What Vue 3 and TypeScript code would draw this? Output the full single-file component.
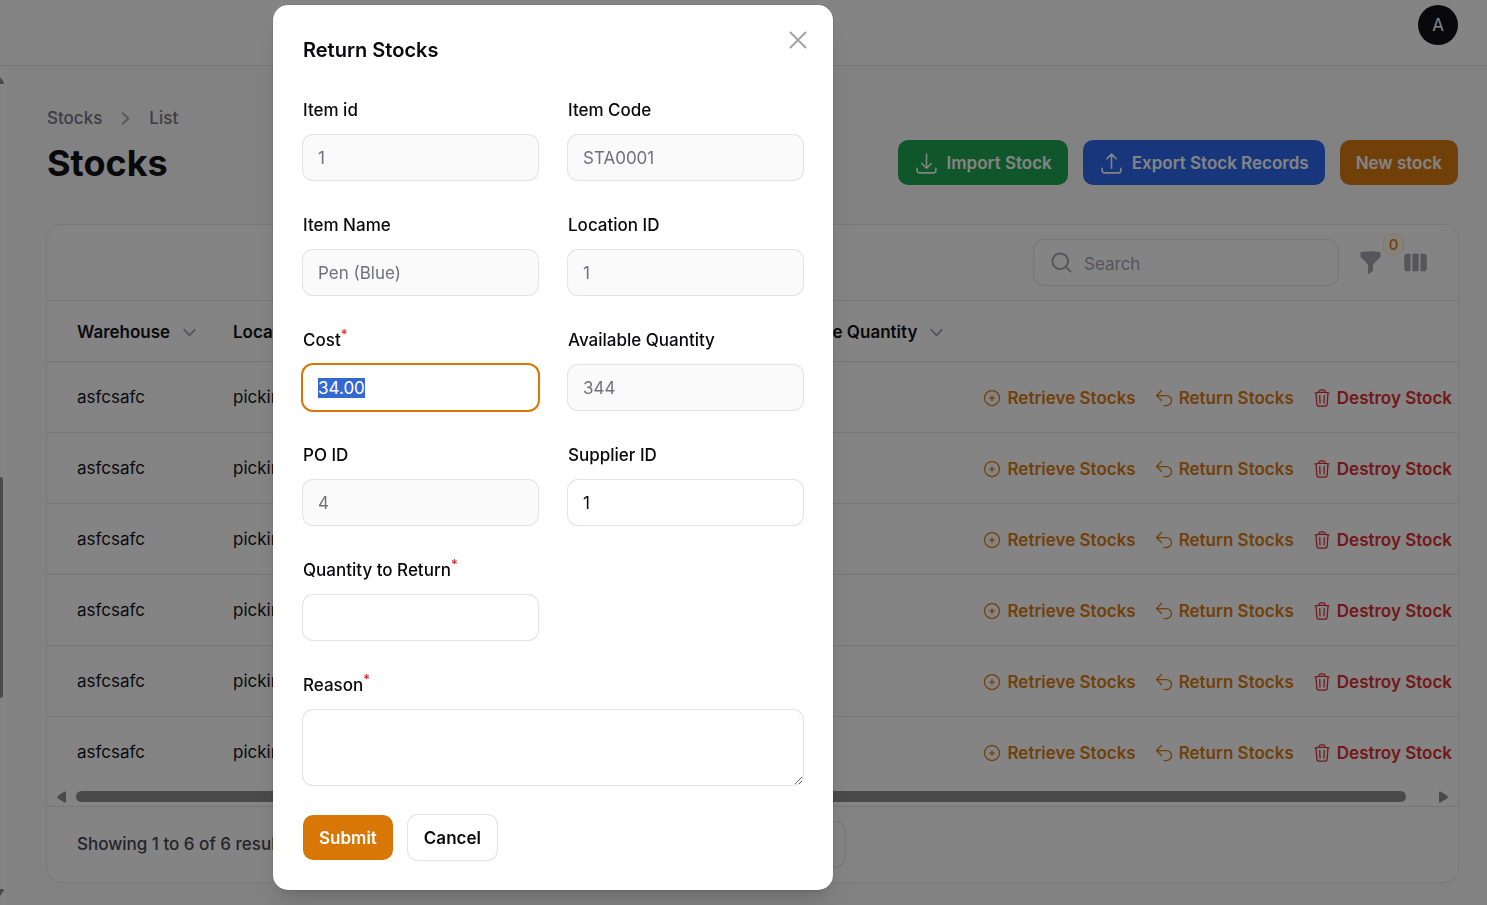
<script setup lang="ts">
import { onMounted, ref } from 'vue'

interface Field {
  id: string
  label: string
  value: string
  disabled?: boolean
  required?: boolean
}

const fields = ref<Field[]>([
  { id: 'item-id', label: 'Item id', value: '1', disabled: true },
  { id: 'item-code', label: 'Item Code', value: 'STA0001', disabled: true },
  { id: 'item-name', label: 'Item Name', value: 'Pen (Blue)', disabled: true },
  { id: 'location-id', label: 'Location ID', value: '1', disabled: true },
  { id: 'cost', label: 'Cost', value: '34.00', required: true },
  { id: 'available', label: 'Available Quantity', value: '344', disabled: true },
  { id: 'po-id', label: 'PO ID', value: '4', disabled: true },
  { id: 'supplier-id', label: 'Supplier ID', value: '1' },
  { id: 'quantity', label: 'Quantity to Return', value: '', required: true },
])
const reason = ref('')
const search = ref('')

const rows = Array.from({ length: 6 }, (_, i) => ({ id: i + 1, warehouse: 'asfcsafc', location: 'picking' }))

const chevronDown =
  'M5.23 7.21a.75.75 0 011.06.02L10 11.168l3.71-3.938a.75.75 0 111.08 1.04l-4.25 4.5a.75.75 0 01-1.08 0l-4.25-4.5a.75.75 0 01.02-1.06z'

const actions = [
  { label: 'Retrieve Stocks', tone: 'amber', icon: 'M12 9v6m3-3H9m12 0a9 9 0 11-18 0 9 9 0 0118 0z' },
  { label: 'Return Stocks', tone: 'amber', icon: 'M9 15L3 9m0 0l6-6M3 9h12a6 6 0 010 12h-3' },
  {
    label: 'Destroy Stock',
    tone: 'red',
    icon: 'M14.74 9l-.346 9m-4.788 0L9.26 9m9.968-3.21c.342.052.682.107 1.022.166m-1.022-.165L18.16 19.673a2.25 2.25 0 01-2.244 2.077H8.084a2.25 2.25 0 01-2.244-2.077L4.772 5.79m14.456 0a48.108 48.108 0 00-3.478-.397m-12 .562c.34-.059.68-.114 1.022-.165m0 0a48.11 48.11 0 013.478-.397m7.5 0v-.916c0-1.18-.91-2.164-2.09-2.201a51.964 51.964 0 00-3.32 0c-1.18.037-2.09 1.022-2.09 2.201v.916m7.5 0a48.667 48.667 0 00-7.5 0',
  },
]

onMounted(() => {
  const cost = document.getElementById('cost') as HTMLInputElement | null
  cost?.focus()
  cost?.select()
})
</script>

<template>
  <div class="shell">
    <header class="topbar">
      <button type="button" class="avatar" aria-label="User menu">A</button>
    </header>

    <div class="body">
      <div class="side-scroll" aria-hidden="true">
        <svg class="side-arrow" viewBox="0 0 4 7"><path d="M0 0L4 5.5Q4 7 3 7H0z" /></svg>
        <span class="side-gap upper"></span>
        <span class="side-thumb"></span>
        <span class="side-gap lower"></span>
        <svg class="side-arrow" viewBox="0 0 4 7"><path d="M0 7L4 1.5Q4 0 3 0H0z" /></svg>
      </div>

      <main class="main">
        <nav class="crumbs" aria-label="Breadcrumb">
          <a href="#stocks">Stocks</a>
          <svg class="icon-md" viewBox="0 0 20 20" fill="currentColor" aria-hidden="true">
            <path d="M7.21 14.77a.75.75 0 01.02-1.06L11.168 10 7.23 6.29a.75.75 0 111.04-1.08l4.5 4.25a.75.75 0 010 1.08l-4.5 4.25a.75.75 0 01-1.06-.02z" />
          </svg>
          <a href="#list">List</a>
        </nav>

        <div class="heading">
          <h1>Stocks</h1>
          <div class="heading-actions">
            <button type="button" class="btn green">
              <svg class="icon-md line" viewBox="0 0 24 24" aria-hidden="true">
                <path d="M3 16.5v2.25A2.25 2.25 0 005.25 21h13.5A2.25 2.25 0 0021 18.75V16.5M16.5 12L12 16.5m0 0L7.5 12m4.5 4.5V3" />
              </svg>
              Import Stock
            </button>
            <button type="button" class="btn blue">
              <svg class="icon-md line" viewBox="0 0 24 24" aria-hidden="true">
                <path d="M3 16.5v2.25A2.25 2.25 0 005.25 21h13.5A2.25 2.25 0 0021 18.75V16.5m-13.5-9L12 3m0 0l4.5 4.5M12 3v13.5" />
              </svg>
              Export Stock Records
            </button>
            <button type="button" class="btn orange">New stock</button>
          </div>
        </div>

        <section class="card">
          <div class="toolbar">
            <div class="search">
              <svg class="icon-md" viewBox="0 0 20 20" fill="currentColor" aria-hidden="true">
                <path fill-rule="evenodd" d="M9 3.5a5.5 5.5 0 100 11 5.5 5.5 0 000-11zM2 9a7 7 0 1112.452 4.391l3.328 3.329a.75.75 0 11-1.06 1.06l-3.329-3.328A7 7 0 012 9z" />
              </svg>
              <input v-model="search" type="search" placeholder="Search" aria-label="Search" />
            </div>
            <button type="button" class="tool" aria-label="Filter">
              <svg class="icon-md" viewBox="0 0 20 20" fill="currentColor" aria-hidden="true">
                <path d="M2.628 1.601C5.028 1.206 7.49 1 10 1s4.973.206 7.372.601a.75.75 0 01.628.74v2.288a2.25 2.25 0 01-.659 1.59l-4.682 4.683a2.25 2.25 0 00-.659 1.59v3.037c0 .684-.31 1.33-.844 1.757l-1.937 1.55A.75.75 0 018 18.25v-5.757a2.25 2.25 0 00-.659-1.591L2.659 6.22A2.25 2.25 0 012 4.629V2.34a.75.75 0 01.628-.74z" />
              </svg>
              <span class="badge">0</span>
            </button>
            <button type="button" class="tool" aria-label="Toggle columns">
              <svg class="icon-md" viewBox="0 0 20 20" fill="currentColor" aria-hidden="true">
                <path d="M14 17h2.75A2.25 2.25 0 0019 14.75v-9.5A2.25 2.25 0 0016.75 3H14v14zM12.5 3h-5v14h5V3zM3.25 3H6v14H3.25A2.25 2.25 0 011 14.75v-9.5A2.25 2.25 0 013.25 3z" />
              </svg>
            </button>
          </div>

          <table class="table">
            <colgroup>
              <col class="c-warehouse" />
              <col class="c-location" />
              <col class="c-quantity" />
              <col />
            </colgroup>
            <thead>
              <tr>
                <th v-for="name in ['Warehouse', 'Location', 'Available Quantity']" :key="name" scope="col">
                  <button type="button" class="sort">
                    {{ name }}
                    <svg class="icon-md" viewBox="0 0 20 20" fill="currentColor" aria-hidden="true">
                      <path :d="chevronDown" />
                    </svg>
                  </button>
                </th>
                <td></td>
              </tr>
            </thead>
            <tbody>
              <tr v-for="row in rows" :key="row.id">
                <td>{{ row.warehouse }}</td>
                <td>{{ row.location }}</td>
                <td></td>
                <td class="actions-cell">
                  <div class="actions">
                    <button v-for="action in actions" :key="action.label" type="button" class="action" :class="action.tone">
                      <svg class="icon-sm line" viewBox="0 0 24 24" aria-hidden="true"><path :d="action.icon" /></svg>
                      {{ action.label }}
                    </button>
                  </div>
                </td>
              </tr>
            </tbody>
          </table>

          <div class="track" aria-hidden="true">
            <svg class="track-arrow" viewBox="0 0 9 12"><path d="M9 1.500V10.500Q9 12 7.500 11.500L1 7.500Q-.5 6 1 4.500L7.500.5Q9 0 9 1.500z" /></svg>
            <span class="thumb"></span>
            <svg class="track-arrow" viewBox="0 0 9 12"><path d="M0 1.500V10.500Q0 12 1.500 11.500L8 7.500Q9.500 6 8 4.500L1.500.5Q0 0 0 1.500z" /></svg>
          </div>

          <footer class="pager">
            <span>Showing 1 to 6 of 6 results</span>
            <select class="per-page" aria-label="Per page">
              <option>10</option>
            </select>
            <span></span>
          </footer>
        </section>
      </main>
    </div>

    <div class="overlay">
      <form class="modal" role="dialog" aria-labelledby="modal-title" @submit.prevent>
        <button type="button" class="close" aria-label="Close">
          <svg class="line" viewBox="0 0 24 24" aria-hidden="true"><path d="M6 18L18 6M6 6l12 12" /></svg>
        </button>
        <h2 id="modal-title">Return Stocks</h2>
        <div class="grid">
          <div v-for="field in fields" :key="field.id" class="field">
            <label :for="field.id">{{ field.label }}<sup v-if="field.required">*</sup></label>
            <input :id="field.id" v-model="field.value" type="text" :disabled="field.disabled" />
          </div>
          <div class="field wide">
            <label for="reason">Reason<sup>*</sup></label>
            <textarea id="reason" v-model="reason"></textarea>
          </div>
        </div>
        <div class="modal-actions">
          <button type="submit" class="btn orange">Submit</button>
          <button type="button" class="btn plain">Cancel</button>
        </div>
      </form>
    </div>
  </div>
</template>

<style>
html,
body {
  background: #fafafa;
}
</style>

<style scoped>
.shell,
.shell * {
  box-sizing: border-box;
}
.shell {
  display: flex;
  flex-direction: column;
  min-height: 100vh;
  color: #09090b;
  font: 400 17px/25px Inter, "Liberation Sans", sans-serif;
}
button,
input,
textarea,
select {
  margin: 0;
  border: 0;
  padding: 0;
  background: none;
  color: inherit;
  font: inherit;
}
a {
  color: inherit;
  text-decoration: none;
}
svg {
  display: block;
  flex: none;
}
.line {
  fill: none;
  stroke: currentColor;
  stroke-width: 1.5;
  stroke-linecap: round;
  stroke-linejoin: round;
}
.icon-md {
  width: 25px;
  height: 25px;
}
.icon-sm {
  width: 20px;
  height: 20px;
}

.topbar {
  display: flex;
  justify-content: flex-end;
  padding: 5px 29px 20px;
  border-bottom: 1px solid #e4e4e7;
  background: #fff;
}
.avatar {
  width: 40px;
  height: 40px;
  border-radius: 50%;
  background: #09090b;
  color: #fff;
}
.body {
  display: flex;
  flex: 1;
}
.side-scroll {
  display: flex;
  flex-direction: column;
  width: 7px;
  padding: 11px 0 9px;
  background: #fff;
  color: #8b8b8b;
}
.side-arrow {
  width: 4px;
  height: 7px;
  fill: currentColor;
}
.side-gap.upper {
  flex: 393;
}
.side-thumb {
  flex: 221;
  width: 3px;
  border-radius: 0 3px 3px 0;
  background: currentColor;
}
.side-gap.lower {
  flex: 191;
}
.main {
  flex: 1;
  min-width: 0;
  padding: 40px 29px 22px 40px;
}
.crumbs {
  display: flex;
  gap: 11px;
  margin-bottom: 9px;
  color: #71717a;
  font-weight: 500;
}
.crumbs svg {
  color: #a1a1aa;
}
.heading {
  display: flex;
  align-items: center;
  justify-content: space-between;
  margin-bottom: 40px;
}
h1 {
  margin: 0;
  font-size: 36px;
  line-height: 46px;
  font-weight: 700;
}
.heading {
  height: 45px;
}
.heading-actions,
.modal-actions {
  display: flex;
  gap: 15px;
}
.btn {
  display: flex;
  align-items: center;
  gap: 8px;
  height: 45px;
  padding: 1px 16px 0;
  border-radius: 10px;
  color: #fff;
  font-weight: 600;
  white-space: nowrap;
}
.green {
  background: #16a34a;
}
.blue {
  background: #2563eb;
}
.orange {
  background: #d97706;
}
.plain {
  color: #09090b;
  background: #fff;
  box-shadow: 0 0 0 1px #e4e4e7, 0 1px 2px rgba(0, 0, 0, 0.05);
}

.card {
  border-radius: 15px;
  background: #fff;
  box-shadow: 0 0 0 1px #e9e9eb, 0 1px 2px rgba(0, 0, 0, 0.05);
}
.toolbar {
  display: flex;
  align-items: center;
  justify-content: flex-end;
  gap: 20px;
  padding: 15px 30px;
}
.search {
  display: flex;
  align-items: center;
  gap: 10px;
  width: 304px;
  height: 45px;
  padding: 0 15px;
  border-radius: 10px;
  box-shadow: 0 0 0 1px #e4e4e7, 0 1px 2px rgba(0, 0, 0, 0.05);
  color: #a1a1aa;
}
.search input {
  flex: 1;
  min-width: 0;
  height: 45px;
  padding-top: 2px;
  outline: 0;
  color: #09090b;
}
.search input::placeholder {
  color: #a1a1aa;
}
.tool {
  position: relative;
  color: #a1a1aa;
}
.badge {
  position: absolute;
  top: -15px;
  left: 26px;
  width: 19px;
  height: 19px;
  border-radius: 6px;
  background: #fffbeb;
  box-shadow: 0 0 0 1px #fbe9c8;
  color: #d97706;
  font-size: 15px;
  line-height: 19px;
  font-weight: 500;
}
.table {
  width: 100%;
  border-collapse: collapse;
  table-layout: fixed;
}
.c-warehouse {
  width: 171px;
}
.c-location {
  width: 535px;
}
.c-quantity {
  width: 205px;
}
.table tr {
  border-top: 1px solid #e4e4e7;
}
.table th,
.table td {
  padding: 0 15px;
  text-align: left;
  white-space: nowrap;
}
.table th:first-child,
.table td:first-child {
  padding-left: 30px;
}
.table thead tr {
  height: 61px;
}
.table thead th {
  padding-top: 2px;
}
.table tbody tr {
  height: 71px;
}
.sort {
  display: flex;
  align-items: center;
  gap: 7px;
  font-weight: 600;
}
.sort svg {
  color: #a1a1aa;
}
.table .actions-cell {
  padding: 2px 6px 0 0;
}
.actions {
  display: flex;
  justify-content: flex-end;
  gap: 18px;
}
.action {
  display: flex;
  align-items: center;
  gap: 5px;
  font-weight: 600;
}
.amber {
  color: #d97706;
}
.red {
  color: #dc2626;
}
.track {
  display: flex;
  align-items: center;
  height: 18px;
  padding: 0 10px;
  color: #8b8b8b;
}
.track-arrow {
  width: 9px;
  height: 12px;
  fill: currentColor;
}
.thumb {
  flex: 1;
  height: 11px;
  margin: 0 33px 0 10px;
  border-radius: 6px;
  background: currentColor;
}
.pager {
  display: grid;
  grid-template-columns: 1fr auto 1fr;
  align-items: center;
  padding: 15px 30px;
  border-top: 1px solid #e4e4e7;
  color: #3f3f46;
  font-weight: 500;
}
.per-page {
  width: 184px;
  height: 45px;
  padding: 0 15px;
  border-radius: 10px;
  box-shadow: 0 0 0 1px #e4e4e7;
  appearance: none;
}

.overlay {
  position: fixed;
  inset: 0;
  overflow: auto;
  padding: 5px 0 15px 273px;
  background: rgba(9, 9, 11, 0.5);
}
.modal {
  position: relative;
  width: 560px;
  max-width: 100%;
  padding: 30px;
  border-radius: 15px;
  background: #fff;
  box-shadow: 0 20px 25px -5px rgba(0, 0, 0, 0.1), 0 8px 10px -6px rgba(0, 0, 0, 0.1), 0 0 0 1px rgba(9, 9, 11, 0.05);
}
.close {
  position: absolute;
  top: 20px;
  right: 20px;
  color: #a1a1aa;
}
.close svg {
  width: 30px;
  height: 30px;
}
h2 {
  margin: 0 0 30px;
  font-size: 20px;
  line-height: 30px;
  font-weight: 600;
}
.grid {
  display: grid;
  grid-template-columns: 1fr 1fr;
  gap: 30px;
}
.field {
  display: flex;
  flex-direction: column;
  gap: 10px;
  min-width: 0;
}
.wide {
  grid-column: 1 / -1;
}
.field label {
  line-height: 30px;
  font-weight: 500;
}
sup {
  color: #dc2626;
  font-size: 13px;
  line-height: 0;
}
.field input,
.field textarea {
  width: 100%;
  height: 45px;
  padding: 8px 15px 7px;
  border-radius: 10px;
  outline: 0;
  box-shadow: 0 0 0 1px #e4e4e7, 0 1px 2px rgba(0, 0, 0, 0.05);
  line-height: 30px;
}
.field textarea {
  display: block;
  height: 75px;
  resize: vertical;
}
.field input:disabled {
  background: #fafafa;
  color: #71717a;
}
.field input:focus,
.field textarea:focus {
  box-shadow: 0 0 0 2px #d97706;
}
.field input::selection {
  background: #3367d1;
  color: #fff;
}
.modal-actions {
  margin-top: 30px;
}
</style>
